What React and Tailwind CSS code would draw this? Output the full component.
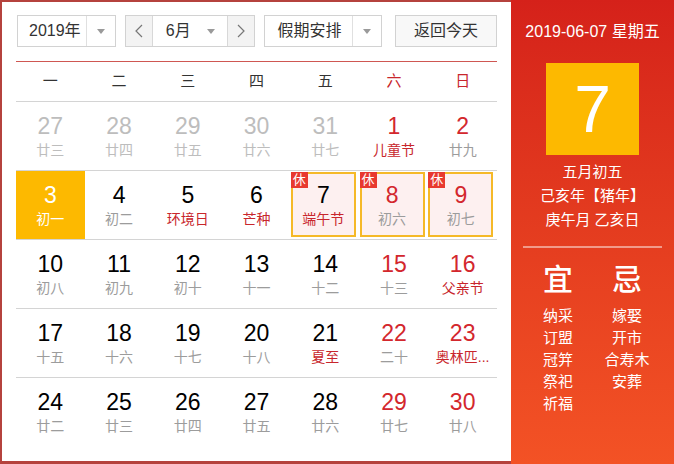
const rows = [
    [
        { d: 27, l: '廿三', muted: true },
        { d: 28, l: '廿四', muted: true },
        { d: 29, l: '廿五', muted: true },
        { d: 30, l: '廿六', muted: true },
        { d: 31, l: '廿七', muted: true },
        { d: 1, l: '儿童节', red: true, fest: true },
        { d: 2, l: '廿九', red: true },
    ],
    [
        { d: 3, l: '初一', today: true },
        { d: 4, l: '初二' },
        { d: 5, l: '环境日', fest: true },
        { d: 6, l: '芒种', fest: true },
        { d: 7, l: '端午节', fest: true, rest: true },
        { d: 8, l: '初六', red: true, rest: true },
        { d: 9, l: '初七', red: true, rest: true },
    ],
    [
        { d: 10, l: '初八' },
        { d: 11, l: '初九' },
        { d: 12, l: '初十' },
        { d: 13, l: '十一' },
        { d: 14, l: '十二' },
        { d: 15, l: '十三', red: true },
        { d: 16, l: '父亲节', red: true, fest: true },
    ],
    [
        { d: 17, l: '十五' },
        { d: 18, l: '十六' },
        { d: 19, l: '十七' },
        { d: 20, l: '十八' },
        { d: 21, l: '夏至', fest: true },
        { d: 22, l: '二十', red: true },
        { d: 23, l: '奥林匹...', red: true, fest: true },
    ],
    [
        { d: 24, l: '廿二' },
        { d: 25, l: '廿三' },
        { d: 26, l: '廿四' },
        { d: 27, l: '廿五' },
        { d: 28, l: '廿六' },
        { d: 29, l: '廿七', red: true },
        { d: 30, l: '廿八', red: true },
    ],
];

const weekdays = ['一', '二', '三', '四', '五', '六', '日'];
const yi = ['纳采', '订盟', '冠笄', '祭祀', '祈福'];
const ji = ['嫁娶', '开市', '合寿木', '安葬'];

function Arrow() {
    return <span className="w-0 h-0 border-x-[4px] border-x-transparent border-t-[5px] border-t-[#9a9a9a]" />;
}

function Chevron({ dir }) {
    return (
        <svg width="8" height="14" viewBox="0 0 8 14" fill="none" stroke="#777" strokeWidth="1.2">
            {dir === 'left' ? <polyline points="7,1 1,7 7,13" /> : <polyline points="1,1 7,7 1,13" />}
        </svg>
    );
}

function DayContent({ c }) {
    let num = 'text-black';
    let lunar = 'text-[#9c9c9c]';
    if (c.muted) {
        num = 'text-[#bdbdbd]';
        lunar = 'text-[#bdbdbd]';
    }
    if (c.red) num = 'text-[#d3272d]';
    if (c.fest) lunar = 'text-[#c8262c]';
    if (c.today) {
        num = 'text-white';
        lunar = 'text-white';
    }
    return (
        <>
            <div className={`text-[23px] leading-[24px] font-['Liberation_Sans',sans-serif] ${num}`}>{c.d}</div>
            <div className={`text-[14px] leading-[24px] whitespace-nowrap ${lunar}`}>{c.l}</div>
        </>
    );
}

function DayCell({ c }) {
    if (c.rest) {
        return (
            <div className="h-[68px]">
                <div className="relative mt-[1px] w-[65px] h-[65px] border-2 border-[#f5b928] bg-[#fdf0f0] flex flex-col items-center pt-[9px]">
                    <span className="absolute -left-[2px] -top-[2px] bg-[#e8392f] text-white text-[13px] leading-[16px] px-[2px]">
                        休
                    </span>
                    <DayContent c={c} />
                </div>
            </div>
        );
    }
    return (
        <div className={`h-[68px] flex flex-col items-center pt-[12px] ${c.today ? 'bg-[#fdb900]' : ''}`}>
            <DayContent c={c} />
        </div>
    );
}

export default function App() {
    return (
        <div className="w-[674px] h-[464px] flex font-['Liberation_Sans','Noto_Sans_CJK_SC',sans-serif] text-[#333] bg-white">
            <div className="w-[511px] h-[464px] border-l-2 border-t-2 border-b-[3px] border-[#b5423d] px-[14px] pt-[13px]">
                <div className="flex h-[32px] text-[16px] text-[#333]">
                    <div className="ml-[1px] w-[99px] flex border border-[#d2d2d2]">
                        <div className="flex-1 flex items-center pl-[11px]">2019年</div>
                        <div className="w-[29px] border-l border-[#e0e0e0] flex items-center justify-center">
                            <Arrow />
                        </div>
                    </div>
                    <div className="ml-[9px] w-[131px] flex border border-[#d2d2d2]">
                        <div className="w-[27px] bg-[#f3f3f3] border-r border-[#d8d8d8] flex items-center justify-center">
                            <Chevron dir="left" />
                        </div>
                        <div className="flex-1 flex items-center pl-[13px] pr-[12px] justify-between">
                            <span>6月</span>
                            <Arrow />
                        </div>
                        <div className="w-[27px] bg-[#f3f3f3] border-l border-[#d8d8d8] flex items-center justify-center">
                            <Chevron dir="right" />
                        </div>
                    </div>
                    <div className="ml-[9px] w-[118px] flex border border-[#d2d2d2]">
                        <div className="flex-1 flex items-center pl-[12px]">假期安排</div>
                        <div className="w-[29px] border-l border-[#e0e0e0] flex items-center justify-center">
                            <Arrow />
                        </div>
                    </div>
                    <button className="ml-[13px] w-[102px] border border-[#d2d2d2] bg-[#f8f8f8] text-[16px] text-[#333]">
                        返回今天
                    </button>
                </div>

                <div className="mt-[14px] border-t border-[#cf5752]">
                    <div className="grid grid-cols-7 h-[40px] border-b border-[#d4d4d4] items-center text-[15px]">
                        {weekdays.map((w, i) => (
                            <div key={w} className={`text-center ${i > 4 ? 'text-[#c8262c]' : 'text-[#333]'}`}>
                                {w}
                            </div>
                        ))}
                    </div>
                    {rows.map((row, r) => (
                        <div key={r} className={`grid grid-cols-7 ${r < 4 ? 'border-b border-[#d4d4d4]' : ''}`}>
                            {row.map((c, i) => (
                                <DayCell key={i} c={c} />
                            ))}
                        </div>
                    ))}
                </div>
            </div>

            <div className="w-[163px] h-[464px] flex flex-col items-center bg-gradient-to-b from-[#d5211a] to-[#f35225] text-white">
                <div className="mt-[22px] text-[16px] leading-[20px] whitespace-nowrap">2019-06-07 星期五</div>
                <div className="mt-[21px] w-[93px] h-[92px] bg-[#fdb900] flex items-center justify-center text-[66px] leading-none">
                    7
                </div>
                <div className="mt-[5px] text-[15px] leading-[24px] text-center">
                    <div>五月初五</div>
                    <div>己亥年【猪年】</div>
                    <div>庚午月 乙亥日</div>
                </div>
                <div className="mt-[14px] w-[139px] h-[2px] bg-[#f19a8a]" />
                <div className="self-start pl-[17px] flex gap-[9px] mt-[15px]">
                    <div className="w-[60px] flex flex-col items-center">
                        <div className="text-[30px] leading-[34px] font-medium">宜</div>
                        <div className="mt-[8px] text-[15px] leading-[22px] text-center">
                            {yi.map((t) => (
                                <div key={t}>{t}</div>
                            ))}
                        </div>
                    </div>
                    <div className="w-[60px] flex flex-col items-center">
                        <div className="text-[30px] leading-[34px] font-medium">忌</div>
                        <div className="mt-[8px] text-[15px] leading-[22px] text-center whitespace-nowrap">
                            {ji.map((t) => (
                                <div key={t}>{t}</div>
                            ))}
                        </div>
                    </div>
                </div>
            </div>
        </div>
    );
}
